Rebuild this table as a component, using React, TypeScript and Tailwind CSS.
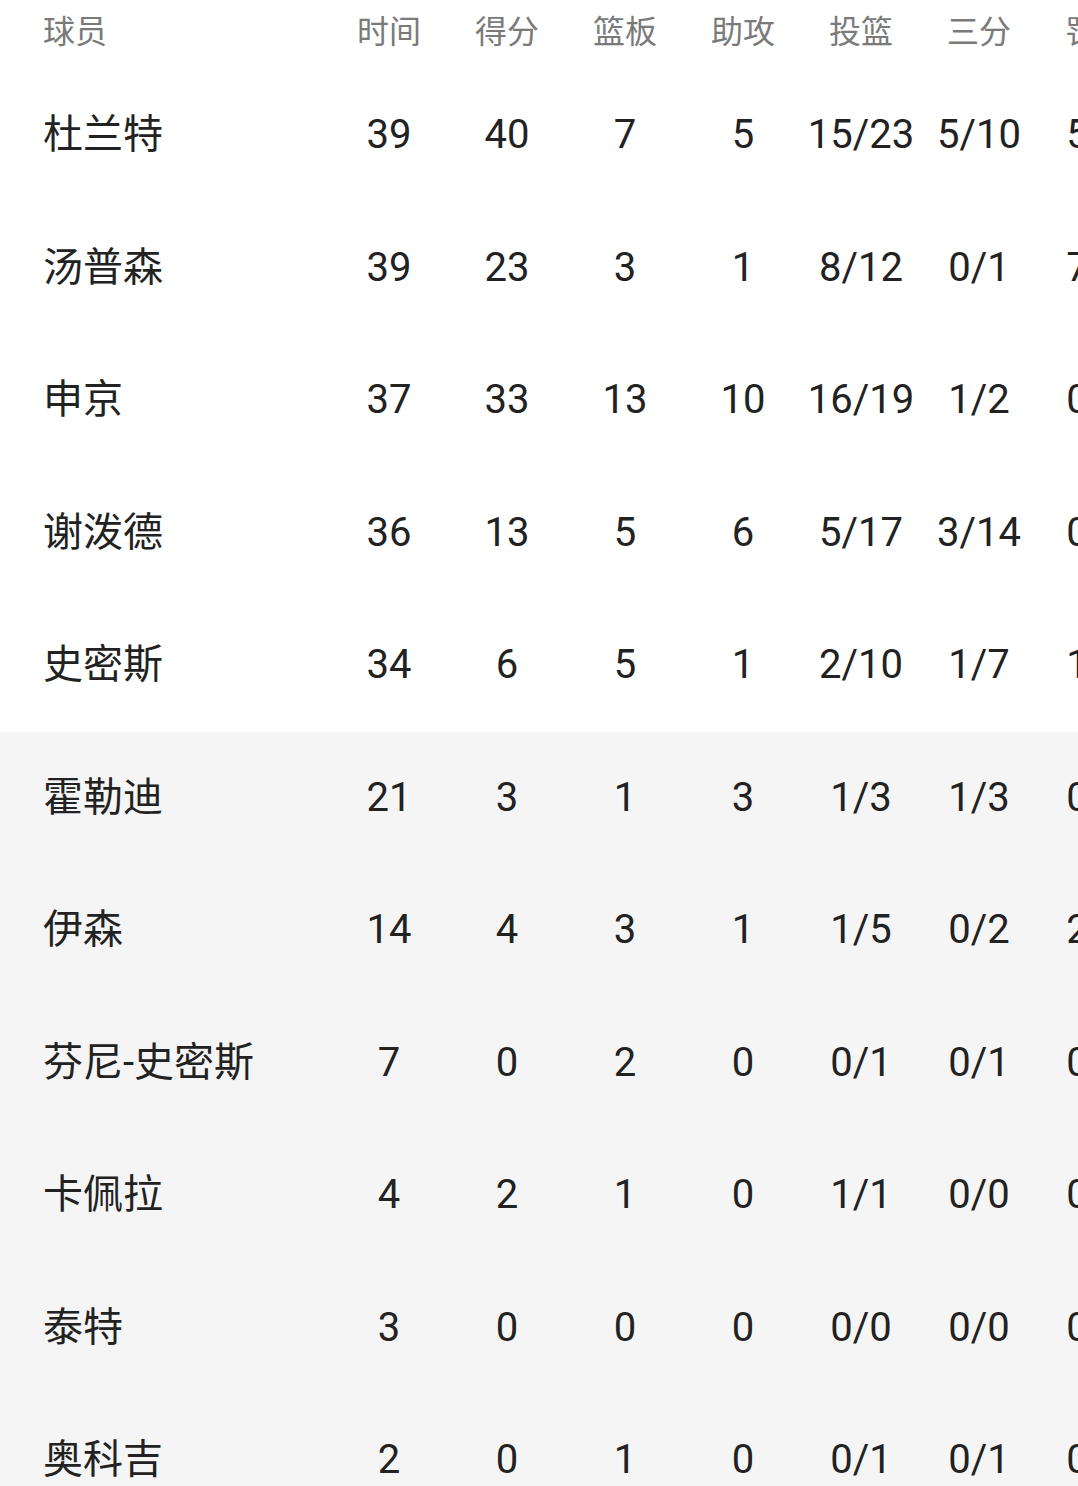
import React from "react";

const headers = ["时间", "得分", "篮板", "助攻", "投篮", "三分", "罚球"];

type Row = { name: string; bench?: boolean; v: string[] };

const rows: Row[] = [
  { name: "杜兰特", v: ["39", "40", "7", "5", "15/23", "5/10", "5/5"] },
  { name: "汤普森", v: ["39", "23", "3", "1", "8/12", "0/1", "7/8"] },
  { name: "申京", v: ["37", "33", "13", "10", "16/19", "1/2", "0/0"] },
  { name: "谢泼德", v: ["36", "13", "5", "6", "5/17", "3/14", "0/0"] },
  { name: "史密斯", v: ["34", "6", "5", "1", "2/10", "1/7", "1/2"] },
  { name: "霍勒迪", bench: true, v: ["21", "3", "1", "3", "1/3", "1/3", "0/0"] },
  { name: "伊森", bench: true, v: ["14", "4", "3", "1", "1/5", "0/2", "2/2"] },
  { name: "芬尼-史密斯", bench: true, v: ["7", "0", "2", "0", "0/1", "0/1", "0/0"] },
  { name: "卡佩拉", bench: true, v: ["4", "2", "1", "0", "1/1", "0/0", "0/0"] },
  { name: "泰特", bench: true, v: ["3", "0", "0", "0", "0/0", "0/0", "0/0"] },
  { name: "奥科吉", bench: true, v: ["2", "0", "1", "0", "0/1", "0/1", "0/0"] },
];

export default function App() {
  return (
    <div
      className="w-[1078px] h-[1486px] overflow-hidden bg-white"
      style={{ fontFamily: "Roboto, 'Noto Sans CJK SC', sans-serif" }}
    >
      <div className="flex h-[69px] items-center pb-[5px] text-[32px] text-[#7a7a7a] whitespace-nowrap">
        <div className="w-[330px] shrink-0 pl-[43px]">球员</div>
        {headers.map((h) => (
          <div key={h} className="w-[118px] shrink-0 text-center">
            {h}
          </div>
        ))}
      </div>
      {rows.map((r) => (
        <div
          key={r.name}
          className={`flex h-[132.5px] items-center text-[40px] text-[#222222] whitespace-nowrap ${
            r.bench ? "bg-[#f5f5f5]" : "bg-white"
          }`}
        >
          <div className="w-[330px] shrink-0 pl-[43px]">{r.name}</div>
          {r.v.map((x, i) => (
            <div key={i} className="w-[118px] shrink-0 text-center">
              {x}
            </div>
          ))}
        </div>
      ))}
    </div>
  );
}
